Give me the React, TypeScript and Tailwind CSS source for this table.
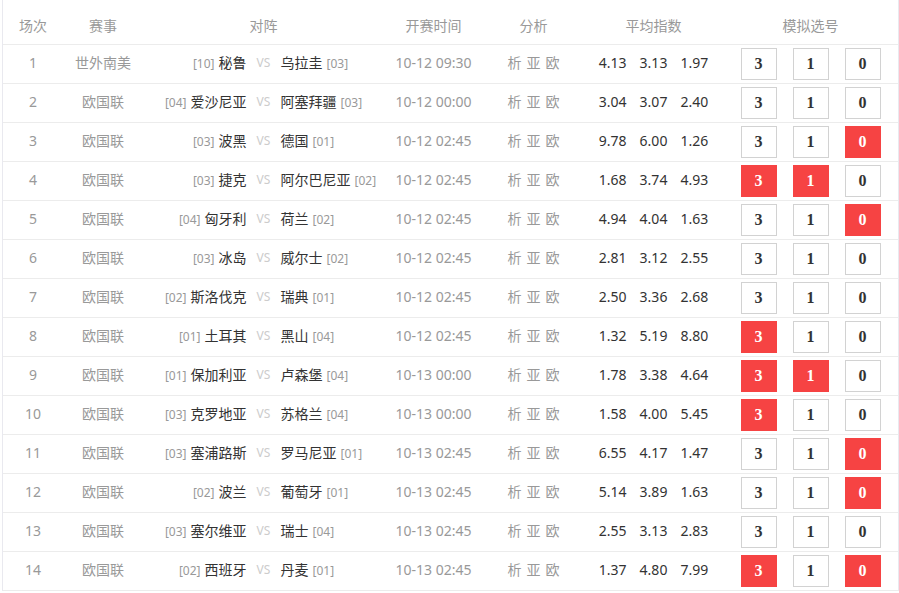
import React from "react";

type Row = {
  no: number;
  league: string;
  hr: string;
  home: string;
  away: string;
  ar: string;
  time: string;
  odds: [string, string, string];
  red: [boolean, boolean, boolean];
};

const rows: Row[] = [
  { no: 1, league: "世外南美", hr: "[10]", home: "秘鲁", away: "乌拉圭", ar: "[03]", time: "10-12 09:30", odds: ["4.13", "3.13", "1.97"], red: [false, false, false] },
  { no: 2, league: "欧国联", hr: "[04]", home: "爱沙尼亚", away: "阿塞拜疆", ar: "[03]", time: "10-12 00:00", odds: ["3.04", "3.07", "2.40"], red: [false, false, false] },
  { no: 3, league: "欧国联", hr: "[03]", home: "波黑", away: "德国", ar: "[01]", time: "10-12 02:45", odds: ["9.78", "6.00", "1.26"], red: [false, false, true] },
  { no: 4, league: "欧国联", hr: "[03]", home: "捷克", away: "阿尔巴尼亚", ar: "[02]", time: "10-12 02:45", odds: ["1.68", "3.74", "4.93"], red: [true, true, false] },
  { no: 5, league: "欧国联", hr: "[04]", home: "匈牙利", away: "荷兰", ar: "[02]", time: "10-12 02:45", odds: ["4.94", "4.04", "1.63"], red: [false, false, true] },
  { no: 6, league: "欧国联", hr: "[03]", home: "冰岛", away: "威尔士", ar: "[02]", time: "10-12 02:45", odds: ["2.81", "3.12", "2.55"], red: [false, false, false] },
  { no: 7, league: "欧国联", hr: "[02]", home: "斯洛伐克", away: "瑞典", ar: "[01]", time: "10-12 02:45", odds: ["2.50", "3.36", "2.68"], red: [false, false, false] },
  { no: 8, league: "欧国联", hr: "[01]", home: "土耳其", away: "黑山", ar: "[04]", time: "10-12 02:45", odds: ["1.32", "5.19", "8.80"], red: [true, false, false] },
  { no: 9, league: "欧国联", hr: "[01]", home: "保加利亚", away: "卢森堡", ar: "[04]", time: "10-13 00:00", odds: ["1.78", "3.38", "4.64"], red: [true, true, false] },
  { no: 10, league: "欧国联", hr: "[03]", home: "克罗地亚", away: "苏格兰", ar: "[04]", time: "10-13 00:00", odds: ["1.58", "4.00", "5.45"], red: [true, false, false] },
  { no: 11, league: "欧国联", hr: "[03]", home: "塞浦路斯", away: "罗马尼亚", ar: "[01]", time: "10-13 02:45", odds: ["6.55", "4.17", "1.47"], red: [false, false, true] },
  { no: 12, league: "欧国联", hr: "[02]", home: "波兰", away: "葡萄牙", ar: "[01]", time: "10-13 02:45", odds: ["5.14", "3.89", "1.63"], red: [false, false, true] },
  { no: 13, league: "欧国联", hr: "[03]", home: "塞尔维亚", away: "瑞士", ar: "[04]", time: "10-13 02:45", odds: ["2.55", "3.13", "2.83"], red: [false, false, false] },
  { no: 14, league: "欧国联", hr: "[02]", home: "西班牙", away: "丹麦", ar: "[01]", time: "10-13 02:45", odds: ["1.37", "4.80", "7.99"], red: [true, false, true] },
];

function Box({ label, red }: { label: string; red: boolean }) {
  return (
    <div
      className={
        red
          ? "w-[36px] h-[32px] flex items-center justify-center bg-[#f64343] border border-[#f64343] text-white font-bold text-[16px] font-['Liberation_Serif',serif]"
          : "w-[36px] h-[32px] flex items-center justify-center bg-white border border-[#d2d2d2] text-[#333] font-bold text-[16px] font-['Liberation_Serif',serif]"
      }
    >
      {label}
    </div>
  );
}

export default function App() {
  return (
    <div className="w-[899px] h-[593px] bg-white font-['Noto_Sans','Noto_Sans_CJK_SC',sans-serif] text-[14px]">
      <div className="ml-[2px] w-[897px] border-l border-r border-[#e9e9ef]">
        <div className="flex h-[45px] items-center pt-[6px] border-b border-[#ececec] text-[#999]">
          <div className="w-[60px] text-center">场次</div>
          <div className="w-[80px] text-center">赛事</div>
          <div className="w-[241px] text-center">对阵</div>
          <div className="w-[99px] text-center">开赛时间</div>
          <div className="w-[101px] text-center">分析</div>
          <div className="w-[139px] text-center">平均指数</div>
          <div className="flex-1 text-center">模拟选号</div>
        </div>
        {rows.map((r) => (
          <div key={r.no} className="flex h-[39px] items-center border-b border-[#ececec]">
            <div className="w-[60px] pb-[3px] text-center text-[#999]">{r.no}</div>
            <div className="w-[80px] pb-[3px] text-center text-[#999]">{r.league}</div>
            <div className="w-[241px] pb-[3px] flex items-center">
              <div className="flex-1 text-right text-[#333] whitespace-nowrap">
                <span className="text-[12px] text-[#999] mr-[4px]">{r.hr}</span>
                {r.home}
              </div>
              <div className="w-[34px] text-center text-[12px] text-[#ccc]">VS</div>
              <div className="flex-1 text-left text-[#333] whitespace-nowrap">
                {r.away}
                <span className="text-[12px] text-[#999] ml-[4px]">{r.ar}</span>
              </div>
            </div>
            <div className="w-[99px] pb-[3px] text-center text-[#999]">{r.time}</div>
            <div className="w-[101px] pb-[3px] flex justify-center gap-[5px] text-[#999]">
              <span>析</span>
              <span>亚</span>
              <span>欧</span>
            </div>
            <div className="w-[139px] pb-[3px] flex justify-center gap-[13px] text-[#333]">
              {r.odds.map((o, i) => (
                <span key={i}>{o}</span>
              ))}
            </div>
            <div className="flex-1 flex justify-center gap-[16px] pb-[1px]">
              <Box label="3" red={r.red[0]} />
              <Box label="1" red={r.red[1]} />
              <Box label="0" red={r.red[2]} />
            </div>
          </div>
        ))}
      </div>
    </div>
  );
}
